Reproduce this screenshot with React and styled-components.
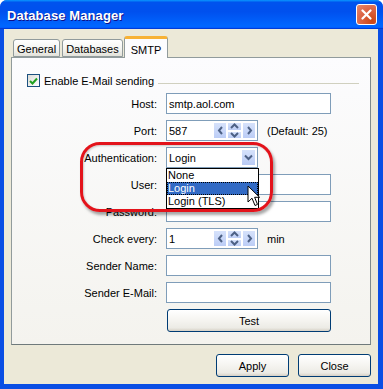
import React from "react"
import styled, { createGlobalStyle } from "styled-components"

const GlobalStyle = createGlobalStyle`
  html, body {
    margin: 0;
    padding: 0;
    background: #fff;
  }
  body {
    font-family: "Liberation Sans", Arial, sans-serif;
    font-size: 11px;
    color: #000;
  }
`

const Spin = () => (
  <SpinGroup>
    <SpinButton>
      <svg width="7" height="9" viewBox="0 0 7 9">
        <path d="M5 1 L2 4.5 L5 8" fill="none" stroke="#4d6185" strokeWidth="2" />
      </svg>
    </SpinButton>
    <SpinStack>
      <SpinHalf>
        <svg width="9" height="6" viewBox="0 0 9 6">
          <path d="M1 5 L4.5 1.5 L8 5" fill="none" stroke="#4d6185" strokeWidth="2" />
        </svg>
      </SpinHalf>
      <SpinHalf>
        <svg width="9" height="6" viewBox="0 0 9 6">
          <path d="M1 1 L4.5 4.5 L8 1" fill="none" stroke="#4d6185" strokeWidth="2" />
        </svg>
      </SpinHalf>
    </SpinStack>
    <SpinButton>
      <svg width="7" height="9" viewBox="0 0 7 9">
        <path d="M2 1 L5 4.5 L2 8" fill="none" stroke="#4d6185" strokeWidth="2" />
      </svg>
    </SpinButton>
  </SpinGroup>
)

const App = () => (
  <Window>
    <GlobalStyle />
    <TitleBar>
      <Title>Database Manager</Title>
      <CloseButton>
        <svg width="11" height="11" viewBox="0 0 11 11">
          <path d="M1.5 1.5 L9.5 9.5 M9.5 1.5 L1.5 9.5" stroke="#fff" strokeWidth="2.2" strokeLinecap="round" />
        </svg>
      </CloseButton>
    </TitleBar>

    <Body>
      <TabStrip>
        <Tab>General</Tab>
        <Tab>Databases</Tab>
        <Tab $active>SMTP</Tab>
      </TabStrip>

      <Panel>
        <GroupHeader>
          <CheckBox>
            <svg width="9" height="8" viewBox="0 0 9 8">
              <path d="M1 4 L3.5 6.5 L8 1.5" fill="none" stroke="#21a121" strokeWidth="2" />
            </svg>
          </CheckBox>
          <span>Enable E-Mail sending</span>
          <GroupLine />
        </GroupHeader>

        <Form>
          <Label>Host:</Label>
          <TextField $wide>smtp.aol.com</TextField>

          <Label>Port:</Label>
          <FieldLine>
            <TextField>
              587
              <Spin />
            </TextField>
            <Hint>(Default: 25)</Hint>
          </FieldLine>

          <Label>Authentication:</Label>
          <ComboWrap>
            <TextField>
              Login
              <DropButton>
                <svg width="9" height="7" viewBox="0 0 9 7">
                  <path d="M1 1.5 L4.5 5 L8 1.5" fill="none" stroke="#4d6185" strokeWidth="2" />
                </svg>
              </DropButton>
            </TextField>
            <DropList>
              <DropItem>None</DropItem>
              <DropItem $selected>Login</DropItem>
              <DropItem>Login (TLS)</DropItem>
            </DropList>
          </ComboWrap>

          <Label>User:</Label>
          <TextField $wide />

          <Label>Password:</Label>
          <TextField $wide />

          <Label>Check every:</Label>
          <FieldLine>
            <TextField>
              1
              <Spin />
            </TextField>
            <Hint>min</Hint>
          </FieldLine>

          <Label>Sender Name:</Label>
          <TextField $wide />

          <Label>Sender E-Mail:</Label>
          <TextField $wide />

          <span />
          <XPButton $wide>Test</XPButton>
        </Form>
      </Panel>

      <ButtonRow>
        <XPButton>Apply</XPButton>
        <XPButton>Close</XPButton>
      </ButtonRow>
    </Body>

    <Annotation />
    <Cursor>
      <svg width="14" height="22" viewBox="0 0 14 22">
        <path d="M1 1 L1 17 L5 13.2 L8 20.5 L10.5 19.4 L7.6 12.3 L12.6 12.3 Z" fill="#fff" stroke="#000" strokeWidth="1" strokeLinejoin="round" />
      </svg>
    </Cursor>
  </Window>
)

const Window = styled.div`
  position: relative;
  width: 383px;
  height: 389px;
  display: flex;
  flex-direction: column;
  background: #0a4ee4;
  border-radius: 7px 7px 0 0;
  overflow: hidden;
  box-sizing: border-box;
`

const TitleBar = styled.div`
  height: 29px;
  flex: none;
  display: flex;
  align-items: center;
  justify-content: space-between;
  padding: 0 6px 0 7px;
  background: linear-gradient(180deg, #0997ff, #0053ee 8%, #0050ee 40%, #0066ff 88%, #0066ff 93%, #005bff 95%, #003dd7 96%, #003dd7);
`

const Title = styled.div`
  color: #fff;
  font-family: "Liberation Sans", Arial, sans-serif;
  font-weight: bold;
  font-size: 13px;
  letter-spacing: 0.1px;
  text-shadow: 1px 1px 0 #0f1089;
  margin-top: 1px;
`

const CloseButton = styled.div`
  width: 21px;
  height: 21px;
  box-sizing: border-box;
  border: 1px solid #fff;
  border-radius: 3px;
  display: flex;
  align-items: center;
  justify-content: center;
  background: radial-gradient(circle at 80% 85%, #cc4614 0%, #dc6546 55%, #e58b6f 100%);
`

const Body = styled.div`
  flex: 1;
  margin: 0 5px 5px 4px;
  background: #ece9d8;
  padding: 8px 7px 7px 7px;
  display: flex;
  flex-direction: column;
`

const TabStrip = styled.div`
  display: flex;
  align-items: flex-end;
  height: 20px;
  padding-left: 2px;
  gap: 2px;
  position: relative;
  z-index: 2;
`

const Tab = styled.div`
  box-sizing: border-box;
  height: ${p => (p.$active ? "22px" : "18px")};
  margin-bottom: ${p => (p.$active ? "-1px" : "0")};
  margin-left: ${p => (p.$active ? "-1px" : "0")};
  padding: ${p => (p.$active ? "2px 6px 0" : "1px 3px 0")};
  display: flex;
  align-items: center;
  border: 1px solid #919b9c;
  border-bottom: ${p => (p.$active ? "none" : "1px solid #919b9c")};
  border-top: ${p => (p.$active ? "3px solid #f7b236" : "1px solid #919b9c")};
  border-radius: 3px 3px 0 0;
  background: ${p => (p.$active ? "#fcfcfe" : "linear-gradient(180deg, #ffffff 0%, #f3f3ef 60%, #e3e2da 100%)")};
`

const Panel = styled.div`
  box-sizing: border-box;
  height: 288px;
  border: 1px solid #919b9c;
  border-right-color: #7f8a8b;
  border-bottom-color: #6f7a7b;
  background: linear-gradient(180deg, #fcfcfe 0%, #f4f3ee 100%);
  padding: 15px 11px 0 0;
`

const GroupHeader = styled.div`
  display: flex;
  align-items: center;
  height: 15px;
  padding-left: 15px;
  gap: 4px;
`

const CheckBox = styled.div`
  width: 13px;
  height: 13px;
  box-sizing: border-box;
  border: 1px solid #1c5180;
  background: linear-gradient(135deg, #dcdcd7 0%, #fff 100%);
  display: flex;
  align-items: center;
  justify-content: center;
`

const GroupLine = styled.div`
  flex: 1;
  height: 1px;
  background: #d0d0bf;
  margin-top: 5px;
`

const Form = styled.div`
  display: grid;
  grid-template-columns: 145px auto;
  column-gap: 9px;
  row-gap: 6px;
  grid-auto-rows: 21px;
  margin-top: 5px;
  align-items: center;

  & > :last-child {
    margin-top: 2px;
    height: 23px;
  }
`

const Label = styled.div`
  text-align: right;
  white-space: nowrap;
`

const FieldLine = styled.div`
  display: flex;
  align-items: center;
  gap: 9px;
`

const TextField = styled.div`
  position: relative;
  box-sizing: border-box;
  width: ${p => (p.$wide ? "165px" : "92px")};
  height: 21px;
  border: 1px solid #7f9db9;
  background: #fff;
  padding: 0 0 0 2px;
  display: flex;
  align-items: center;
`

const Hint = styled.span`
  white-space: nowrap;
`

const SpinGroup = styled.div`
  position: absolute;
  right: 1px;
  top: 1px;
  bottom: 1px;
  display: flex;
`

const SpinButton = styled.div`
  width: 14px;
  box-sizing: border-box;
  border: 1px solid #fff;
  background: linear-gradient(180deg, #d6e2fb 0%, #bccdf6 100%);
  display: flex;
  align-items: center;
  justify-content: center;
`

const SpinStack = styled.div`
  width: 15px;
  display: flex;
  flex-direction: column;
`

const SpinHalf = styled(SpinButton)`
  width: 15px;
  flex: 1;
`

const ComboWrap = styled.div`
  position: relative;
  z-index: 3;
`

const DropButton = styled.div`
  position: absolute;
  right: 1px;
  top: 1px;
  bottom: 1px;
  width: 15px;
  box-sizing: border-box;
  border: 1px solid #fff;
  background: linear-gradient(180deg, #d6e2fb 0%, #b9cbf5 100%);
  display: flex;
  align-items: center;
  justify-content: center;
`

const DropList = styled.div`
  position: absolute;
  left: 0;
  top: 21px;
  width: 93px;
  box-sizing: border-box;
  border: 1px solid #000;
  background: #fff;
  display: flex;
  flex-direction: column;
`

const DropItem = styled.div`
  height: 13px;
  line-height: 13px;
  padding-left: 1px;
  box-sizing: border-box;
  color: ${p => (p.$selected ? "#fff" : "#000")};
  background: ${p => (p.$selected ? "#316ac5" : "transparent")};
  outline: ${p => (p.$selected ? "1px dotted #000" : "none")};
  outline-offset: -1px;
`

const XPButton = styled.div`
  box-sizing: border-box;
  width: ${p => (p.$wide ? "164px" : "73px")};
  height: 23px;
  margin-left: ${p => (p.$wide ? "1px" : "0")};
  border: 1px solid #003c74;
  border-radius: 3px;
  background: linear-gradient(180deg, #ffffff 0%, #f5f4f0 50%, #ecebe5 85%, #d6d0c5 100%);
  display: flex;
  align-items: center;
  justify-content: center;
`

const ButtonRow = styled.div`
  display: flex;
  justify-content: flex-end;
  gap: 9px;
  margin-top: 9px;
`

const Annotation = styled.div`
  position: absolute;
  left: 80px;
  top: 142px;
  width: 193px;
  height: 70px;
  box-sizing: border-box;
  border: 3px solid #e3131b;
  border-radius: 20px;
  box-shadow: 2px 3px 3px rgba(0, 0, 0, 0.35), inset 1px 1px 2px rgba(0, 0, 0, 0.2);
  z-index: 5;
  pointer-events: none;
`

const Cursor = styled.div`
  position: absolute;
  left: 247px;
  top: 185px;
  z-index: 6;
  line-height: 0;
`

export default App
